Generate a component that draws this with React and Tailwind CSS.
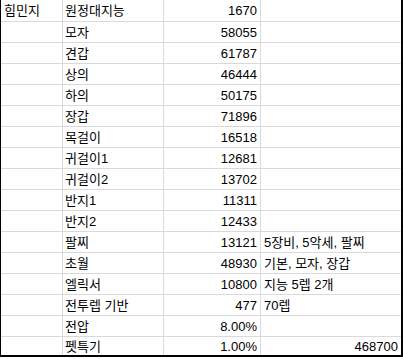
const rows = [
  ["힘민지", "원정대지능", "1670", "", ""],
  ["", "모자", "58055", "", ""],
  ["", "견갑", "61787", "", ""],
  ["", "상의", "46444", "", ""],
  ["", "하의", "50175", "", ""],
  ["", "장갑", "71896", "", ""],
  ["", "목걸이", "16518", "", ""],
  ["", "귀걸이1", "12681", "", ""],
  ["", "귀걸이2", "13702", "", ""],
  ["", "반지1", "11311", "", ""],
  ["", "반지2", "12433", "", ""],
  ["", "팔찌", "13121", "5장비, 5악세, 팔찌", ""],
  ["", "초월", "48930", "기본, 모자, 장갑", ""],
  ["", "엘릭서", "10800", "지능 5렙 2개", ""],
  ["", "전투렙 기반", "477", "70렙", ""],
  ["", "전압", "8.00%", "", ""],
  ["", "펫특기", "1.00%", "", "468700"],
];

export default function App() {
  return (
    <div
      className="w-[403px] h-[359px] bg-white text-black text-[13px] leading-none"
      style={{ fontFamily: '"Liberation Sans", "Noto Sans CJK KR", sans-serif' }}
    >
      <div className="w-[403px] border-l border-r-2 border-b-2 border-black">
        {rows.map((r, i) => {
          const last = i === rows.length - 1;
          const h = i === 0 ? "h-[22px]" : last ? "h-[18px]" : "h-[21px]";
          const line = last ? "" : "border-b border-[#d9d9d9]";
          return (
            <div key={i} className={`grid grid-cols-[62px_101px_97px_1fr] ${h} ${line}`}>
              <div className="flex items-center pl-[3px] border-r border-[#d9d9d9]">{r[0]}</div>
              <div className="flex items-center pl-[2px] border-r border-[#d9d9d9]">{r[1]}</div>
              <div className="flex items-center justify-end pr-[3px] border-r border-[#d9d9d9]">{r[2]}</div>
              <div className="flex items-center pl-[3px] pr-[3px]">
                {r[4] ? <span className="ml-auto">{r[4]}</span> : r[3]}
              </div>
            </div>
          );
        })}
      </div>
    </div>
  );
}
